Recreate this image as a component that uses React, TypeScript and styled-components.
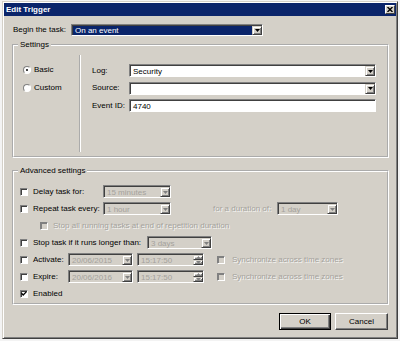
import React from "react";
import styled, { createGlobalStyle } from "styled-components";

const face = "#d4d0c8";
const shadow = "#808080";
const dark = "#404040";
const navy = "#0a246a";
const greyText = "#a4a29c";

const GlobalStyle = createGlobalStyle`
  html, body { margin: 0; padding: 0; }
  body {
    background: #f3f3f3;
    font-family: "Liberation Sans", Arial, sans-serif;
    font-size: 8px;
    color: #000;
  }
`;

const Screen = styled.div`
  width: 400px;
  height: 341px;
  box-sizing: border-box;
  padding: 1px 2px 0 2px;
  overflow: hidden;
  background: #f3f3f3;
`;

const Dialog = styled.div`
  width: 396px;
  height: 338px;
  box-sizing: border-box;
  background: ${face};
  border: 1px solid;
  border-color: ${face} ${dark} ${dark} ${face};
  box-shadow: inset 1px 1px #fff, inset -1px -1px ${shadow};
  padding: 1px;
  display: flex;
  flex-direction: column;
`;

const TitleBar = styled.div`
  height: 13px;
  flex: none;
  background: ${navy};
  color: #fff;
  font-weight: bold;
  display: flex;
  align-items: center;
  justify-content: space-between;
  padding: 0 1px 0 2px;
`;

const CloseBtn = styled.div`
  width: 10px;
  height: 9px;
  box-sizing: border-box;
  background: ${face};
  border: 1px solid;
  border-color: #fff ${dark} ${dark} #fff;
  display: flex;
  align-items: center;
  justify-content: center;
`;

const Body = styled.div`
  flex: 1;
  display: flex;
  flex-direction: column;
  padding: 8px 7px 0 8px;
`;

const Row = styled.div<{ $h?: number; $indent?: number }>`
  height: ${(p) => p.$h ?? 13}px;
  flex: none;
  display: flex;
  align-items: center;
  padding-left: ${(p) => p.$indent ?? 0}px;
`;

const Label = styled.span<{ $w?: number; $off?: boolean; $ml?: number }>`
  ${(p) => (p.$w ? `width: ${p.$w}px; flex: none;` : "")}
  margin-left: ${(p) => p.$ml ?? 0}px;
  white-space: nowrap;
  line-height: 10px;
  color: ${(p) => (p.$off ? greyText : "#000")};
  ${(p) => (p.$off ? "text-shadow: 1px 1px rgba(255,255,255,0.8);" : "")}
`;

const Field = styled.div<{ $w: number; $tone?: "white" | "navy" | "off"; $ml?: number }>`
  width: ${(p) => p.$w}px;
  height: 100%;
  flex: none;
  box-sizing: border-box;
  margin-left: ${(p) => p.$ml ?? 0}px;
  display: flex;
  border: 1px solid;
  border-color: ${shadow} #fff #fff ${shadow};
  box-shadow: inset 1px 1px ${dark};
  padding: 1px 0 0 1px;
  background: ${(p) => (p.$tone === "navy" ? navy : p.$tone === "off" ? face : "#fff")};
  color: ${(p) => (p.$tone === "navy" ? "#fff" : p.$tone === "off" ? greyText : "#000")};
`;

const Value = styled.span`
  flex: 1;
  padding-left: 2px;
  display: flex;
  align-items: center;
  white-space: nowrap;
  overflow: hidden;
`;

const DropBtn = styled.div`
  width: 10px;
  flex: none;
  box-sizing: border-box;
  background: ${face};
  border: 1px solid;
  border-color: ${face} ${dark} ${dark} ${face};
  box-shadow: inset 1px 1px #fff, inset -1px -1px ${shadow};
  display: flex;
  align-items: center;
  justify-content: center;
`;

const Spin = styled.div`
  width: 10px;
  flex: none;
  display: flex;
  flex-direction: column;
`;

const SpinHalf = styled(DropBtn)`
  width: 100%;
  flex: 1;
`;

const Group = styled.fieldset<{ $pt: number; $pb: number; $mt?: number }>`
  margin: ${(p) => p.$mt ?? 0}px 0 0 0;
  padding: ${(p) => p.$pt}px 0 ${(p) => p.$pb}px 0;
  min-width: 0;
  border: 2px groove #ffffff;
`;

const Legend = styled.legend`
  margin-left: 4px;
  padding: 0 2px;
  line-height: 10px;
  font-size: 8px;
`;

const SettingsBody = styled.div`
  height: 97px;
  display: flex;
`;

const ModeCol = styled.div`
  width: 67px;
  flex: none;
  box-sizing: border-box;
  border-right: 2px groove #ffffff;
  padding: 10px 0 0 9px;
  display: flex;
  flex-direction: column;
  gap: 8px;
`;

const FilterCol = styled.div`
  flex: 1;
  padding: 9px 0 0 11px;
  display: flex;
  flex-direction: column;
  gap: 4.5px;
`;

const Radio = styled.span<{ $on?: boolean }>`
  width: 8px;
  height: 8px;
  flex: none;
  box-sizing: border-box;
  border-radius: 50%;
  border: 1px solid;
  border-color: ${shadow} #fff #fff ${shadow};
  background: #fff;
  margin-right: 3px;
  display: flex;
  align-items: center;
  justify-content: center;
  &::after {
    content: "";
    width: 2px;
    height: 2px;
    border-radius: 50%;
    background: ${(p) => (p.$on ? "#000" : "transparent")};
  }
`;

const Check = styled.span<{ $off?: boolean; $ml?: number }>`
  width: 8px;
  height: 8px;
  flex: none;
  box-sizing: border-box;
  margin-left: ${(p) => p.$ml ?? 0}px;
  margin-right: 5px;
  border: 1px solid;
  border-color: ${shadow} #fff #fff ${shadow};
  box-shadow: inset 1px 1px ${(p) => (p.$off ? shadow : dark)};
  background: ${(p) => (p.$off ? face : "#fff")};
  display: flex;
  align-items: center;
  justify-content: center;
`;

const Rows = styled.div`
  display: flex;
  flex-direction: column;
  gap: 4px;
  padding-left: 6px;
`;

const Buttons = styled.div`
  display: flex;
  justify-content: flex-end;
  gap: 4px;
  margin-top: 8px;
  padding-right: 1px;
`;

const PushButton = styled.button<{ $w: number; $default?: boolean }>`
  width: ${(p) => p.$w}px;
  height: 17px;
  box-sizing: border-box;
  margin: 0;
  padding: 0;
  font: inherit;
  color: #000;
  background: ${face};
  border: 1px solid;
  border-color: ${(p) => (p.$default ? "#000" : `#fff ${dark} ${dark} #fff`)};
  box-shadow: ${(p) =>
    p.$default
      ? `inset 1px 1px #fff, inset -1px -1px ${dark}, inset -2px -2px ${shadow}`
      : `inset -1px -1px ${shadow}`};
`;

const Arrow = ({ color = "#000", up = false }: { color?: string; up?: boolean }) => (
  <svg width="5" height="3" viewBox="0 0 5 3">
    <path d={up ? "M0 3h5L2.5 0z" : "M0 0h5L2.5 3z"} fill={color} />
  </svg>
);

const Tick = () => (
  <svg width="6" height="5" viewBox="0 0 6 5">
    <path d="M0.5 2.2 L2.2 4 L5.5 0.6" fill="none" stroke="#000" strokeWidth="1.3" />
  </svg>
);

const Combo = ({
  w,
  value,
  tone = "white",
  ml,
}: {
  w: number;
  value: string;
  tone?: "white" | "navy" | "off";
  ml?: number;
}) => (
  <Field $w={w} $tone={tone} $ml={ml}>
    <Value>{value}</Value>
    <DropBtn>
      <Arrow color={tone === "off" ? shadow : "#000"} />
    </DropBtn>
  </Field>
);

const TimeBox = ({ value, ml }: { value: string; ml?: number }) => (
  <Field $w={67} $tone="off" $ml={ml}>
    <Value>{value}</Value>
    <Spin>
      <SpinHalf>
        <Arrow up color={shadow} />
      </SpinHalf>
      <SpinHalf>
        <Arrow color={shadow} />
      </SpinHalf>
    </Spin>
  </Field>
);

const DateRow = ({ label, date }: { label: string; date: string }) => (
  <Row>
    <Check />
    <Label $w={35}>{label}</Label>
    <Combo w={65} value={date} tone="off" />
    <TimeBox value="15:17:50" ml={4} />
    <Check $off $ml={13} />
    <Label $off $ml={2}>Synchronize across time zones</Label>
  </Row>
);

export default function App() {
  return (
    <Screen>
      <GlobalStyle />
      <Dialog>
        <TitleBar>
          <span>Edit Trigger</span>
          <CloseBtn>
            <svg width="6" height="5" viewBox="0 0 6 5">
              <path d="M0.5 0 L5.5 5 M5.5 0 L0.5 5" stroke="#000" strokeWidth="1.4" />
            </svg>
          </CloseBtn>
        </TitleBar>
        <Body>
          <Row $h={12} $indent={1}>
            <Label $w={58}>Begin the task:</Label>
            <Combo w={192} value="On an event" tone="navy" />
          </Row>

          <Group $pt={5} $pb={4} $mt={4}>
            <Legend>Settings</Legend>
            <SettingsBody>
              <ModeCol>
                <Row $h={10}>
                  <Radio $on />
                  <Label>Basic</Label>
                </Row>
                <Row $h={10}>
                  <Radio />
                  <Label>Custom</Label>
                </Row>
              </ModeCol>
              <FilterCol>
                <Row>
                  <Label $w={37}>Log:</Label>
                  <Combo w={247} value="Security" />
                </Row>
                <Row>
                  <Label $w={37}>Source:</Label>
                  <Combo w={247} value="" />
                </Row>
                <Row>
                  <Label $w={37}>Event ID:</Label>
                  <Field $w={247}>
                    <Value>4740</Value>
                  </Field>
                </Row>
              </FilterCol>
            </SettingsBody>
          </Group>

          <Group $pt={9} $pb={3} $mt={8}>
            <Legend>Advanced settings</Legend>
            <Rows>
              <Row>
                <Check />
                <Label $w={70}>Delay task for:</Label>
                <Combo w={68} value="15 minutes" tone="off" />
              </Row>
              <Row>
                <Check />
                <Label $w={70}>Repeat task every:</Label>
                <Combo w={68} value="1 hour" tone="off" />
                <Label $w={64} $ml={42} $off>
                  for a duration of:
                </Label>
                <Combo w={61} value="1 day" tone="off" />
              </Row>
              <Row $indent={20}>
                <Check $off />
                <Label $off>Stop all running tasks at end of repetition duration</Label>
              </Row>
              <Row>
                <Check />
                <Label $w={114}>Stop task if it runs longer than:</Label>
                <Combo w={65} value="3 days" tone="off" />
              </Row>
              <DateRow label="Activate:" date="20/06/2015" />
              <DateRow label="Expire:" date="20/06/2016" />
              <Row>
                <Check>
                  <Tick />
                </Check>
                <Label>Enabled</Label>
              </Row>
            </Rows>
          </Group>

          <Buttons>
            <PushButton $w={52} $default>
              OK
            </PushButton>
            <PushButton $w={53}>Cancel</PushButton>
          </Buttons>
        </Body>
      </Dialog>
    </Screen>
  );
}
